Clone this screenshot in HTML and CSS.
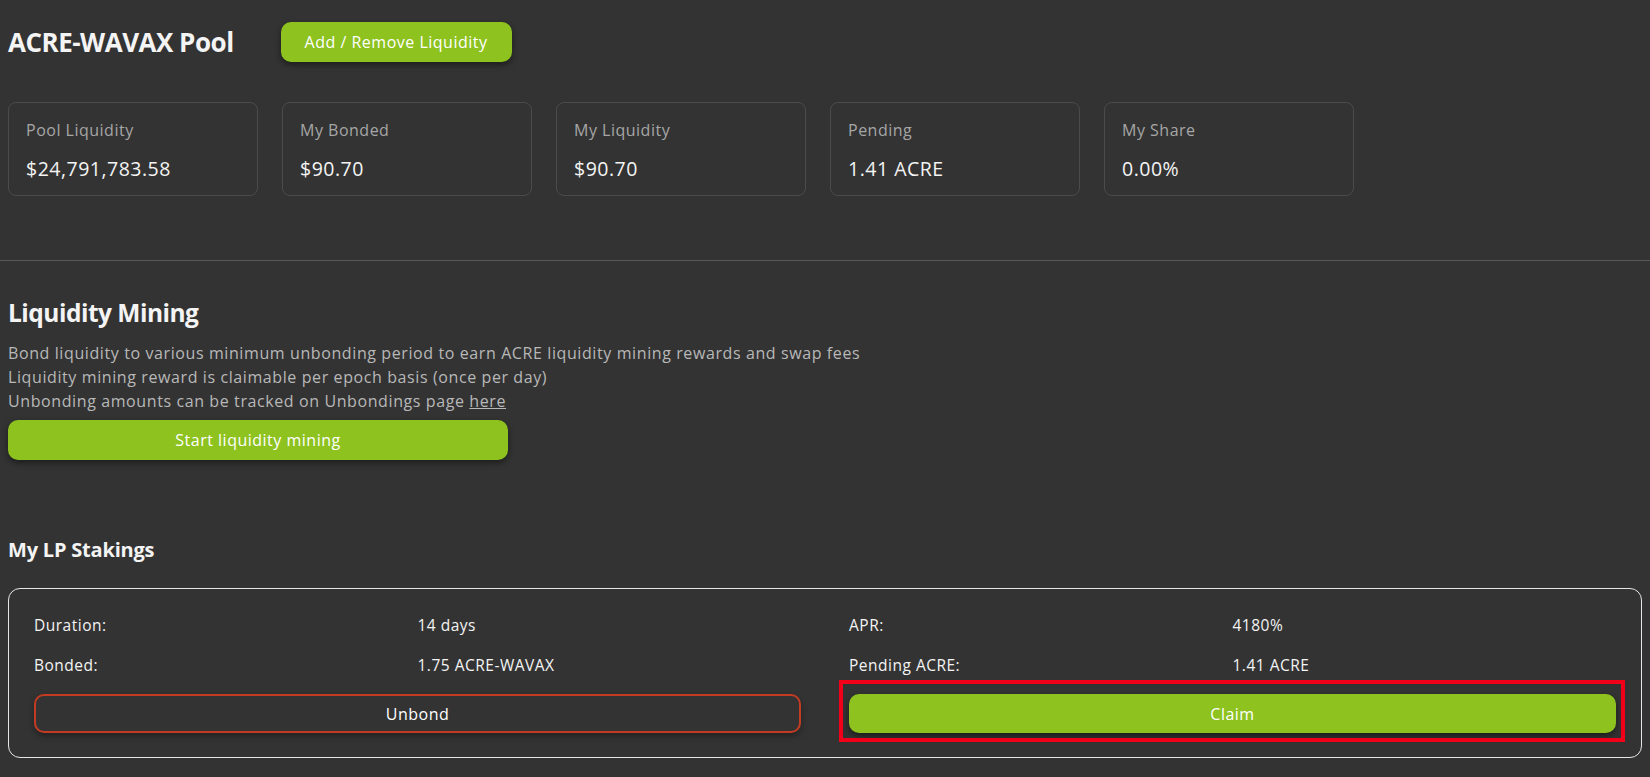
FILE: index.html
```html
<!DOCTYPE html>
<html lang="en">
<head>
<meta charset="utf-8">
<title>ACRE-WAVAX Pool</title>
<link rel="stylesheet" href="styles.css">
</head>
<body>
<main class="page">
  <section class="section pool">
    <header class="pool-head">
      <h1 class="pool-title">ACRE-WAVAX Pool</h1>
      <button class="btn btn-green btn-head">Add / Remove Liquidity</button>
    </header>
    <div class="stats">
      <div class="stat-card">
        <div class="stat-label">Pool Liquidity</div>
        <div class="stat-value">$24,791,783.58</div>
      </div>
      <div class="stat-card">
        <div class="stat-label">My Bonded</div>
        <div class="stat-value">$90.70</div>
      </div>
      <div class="stat-card">
        <div class="stat-label">My Liquidity</div>
        <div class="stat-value">$90.70</div>
      </div>
      <div class="stat-card">
        <div class="stat-label">Pending</div>
        <div class="stat-value">1.41 ACRE</div>
      </div>
      <div class="stat-card">
        <div class="stat-label">My Share</div>
        <div class="stat-value">0.00%</div>
      </div>
    </div>
  </section>

  <hr class="divider">

  <section class="section mining">
    <h2 class="mining-title">Liquidity Mining</h2>
    <div class="mining-text">
      <p>Bond liquidity to various minimum unbonding period to earn ACRE liquidity mining rewards and swap fees</p>
      <p>Liquidity mining reward is claimable per epoch basis (once per day)</p>
      <p>Unbonding amounts can be tracked on Unbondings page <a href="#" class="link">here</a></p>
    </div>
    <button class="btn btn-green btn-start">Start liquidity mining</button>
  </section>

  <section class="section stakings">
    <h3 class="stakings-title">My LP Stakings</h3>
    <div class="staking-box">
      <div class="staking-col">
        <div class="kv"><span class="kv-key">Duration:</span><span class="kv-val">14 days</span></div>
        <div class="kv"><span class="kv-key">Bonded:</span><span class="kv-val">1.75 ACRE-WAVAX</span></div>
        <div class="btn-wrap">
          <button class="btn btn-outline-red">Unbond</button>
        </div>
      </div>
      <div class="staking-col">
        <div class="kv"><span class="kv-key">APR:</span><span class="kv-val">4180%</span></div>
        <div class="kv"><span class="kv-key">Pending ACRE:</span><span class="kv-val">1.41 ACRE</span></div>
        <div class="btn-wrap">
          <button class="btn btn-green">Claim</button>
          <span class="highlight"></span>
        </div>
      </div>
    </div>
  </section>
</main>
</body>
</html>
```

FILE: styles.css
```css
* {
  box-sizing: border-box;
}

html, body {
  margin: 0;
  padding: 0;
  background: #333333;
  color: #f2f2f2;
  font-family: "Open Sans", "Noto Sans", "Liberation Sans", sans-serif;
  letter-spacing: 0.4px;
  height: 100%;
  overflow: hidden;
}

.page {
  display: flex;
  flex-direction: column;
}

.section {
  padding: 0 8px;
}

/* Header */
.pool-head {
  display: flex;
  align-items: center;
  gap: 47px;
  margin-top: 22px;
  height: 40px;
}

.pool-title {
  margin: 0;
  font-size: 26px;
  font-weight: 700;
  color: #f4f4f4;
  letter-spacing: -0.5px;
}

.btn {
  font-family: inherit;
  letter-spacing: 0.5px;
  border: none;
  cursor: pointer;
  display: flex;
  align-items: center;
  justify-content: center;
  font-size: 16px;
  font-weight: 500;
  color: #ffffff;
  border-radius: 10px;
  height: 40px;
  padding: 0;
}

.btn-green {
  background: #8dc21f;
  box-shadow: 0 3px 6px rgba(0, 0, 0, 0.45);
}

.btn-head {
  width: 231px;
}

/* Stats */
.stats {
  display: flex;
  gap: 24px;
  margin-top: 40px;
}

.stat-card {
  width: 250px;
  height: 94px;
  border: 1px solid #4b4b4b;
  border-radius: 8px;
  padding: 15px 17px 0;
  display: flex;
  flex-direction: column;
}

.stat-label {
  font-size: 16px;
  line-height: 24px;
  color: #a6a6a6;
  letter-spacing: 0.5px;
}

.stat-value {
  margin-top: 13px;
  font-size: 19.5px;
  line-height: 28px;
  color: #f4f4f4;
  letter-spacing: 0.5px;
}

/* Divider */
.divider {
  margin: 64px 0 0;
  border: none;
  border-top: 1px solid #585858;
  height: 0;
}

/* Mining */
.mining {
  display: flex;
  flex-direction: column;
  align-items: flex-start;
}

.mining-title {
  margin: 34px 0 0;
  font-size: 24.5px;
  line-height: 36px;
  font-weight: 700;
  color: #f4f4f4;
  letter-spacing: -0.5px;
}

.mining-text {
  margin-top: 10px;
  font-size: 16px;
  line-height: 24px;
  color: #b8b8b8;
  letter-spacing: 0.6px;
}

.mining-text p {
  margin: 0;
}

.link {
  color: #b8b8b8;
  text-decoration: underline;
}

.btn-start {
  width: 500px;
  margin-top: 7px;
}

/* Stakings */
.stakings-title {
  margin: 76px 0 0;
  font-size: 20px;
  line-height: 28px;
  font-weight: 700;
  color: #f4f4f4;
  letter-spacing: -0.2px;
}

.staking-box {
  margin-top: 24px;
  border: 1px solid #e6e6e6;
  border-radius: 12px;
  padding: 24px 25px 24px;
  display: grid;
  grid-template-columns: 1fr 1fr;
  column-gap: 48px;
}

.staking-col {
  display: flex;
  flex-direction: column;
  gap: 16px;
}

.kv {
  display: grid;
  grid-template-columns: 1fr 1fr;
  font-size: 15.5px;
  line-height: 24px;
  font-weight: 500;
  color: #f4f4f4;
  letter-spacing: 0.5px;
}

.btn-wrap {
  position: relative;
  margin-top: 1px;
}

.btn-wrap .btn {
  width: 100%;
  height: 39px;
}

.btn-outline-red {
  background: transparent;
  border: 2px solid #c23b22;
  box-shadow: 0 3px 6px rgba(0, 0, 0, 0.35);
}

.highlight {
  position: absolute;
  left: -10px;
  right: -9px;
  top: -14px;
  bottom: -9px;
  border: 4px solid #f20019;
  pointer-events: none;
}
```
